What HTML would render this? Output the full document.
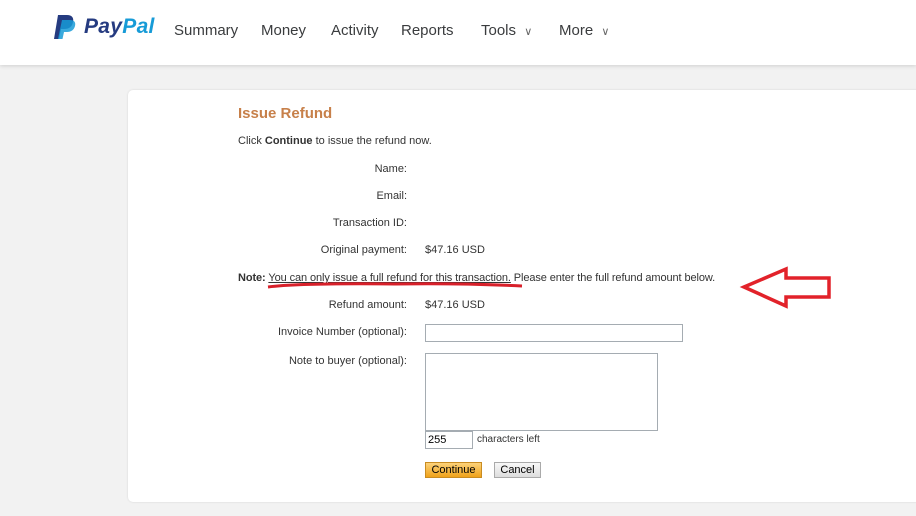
<!DOCTYPE html>
<html><head><style>
body{margin:0;width:916px;height:516px;overflow:hidden;background:#f2f2f2;font-family:"Liberation Sans",Arial,sans-serif;position:relative}
.hdr{position:absolute;left:0;top:0;width:916px;height:65px;background:#fff;box-shadow:0 1px 4px rgba(0,0,0,.15)}
.nav{position:absolute;top:22px;font-size:15px;color:#3a3c3e}
.card{position:absolute;left:128px;top:90px;width:800px;height:412px;background:#fff;border-radius:5px;box-shadow:0 0 2px rgba(0,0,0,.12)}
.t{position:absolute;font-size:11px;color:#333;white-space:nowrap}
.l{position:absolute;right:509px;font-size:11px;color:#333;text-align:right;white-space:nowrap}
.in{position:absolute;border:1px solid #a5acb2;background:#fff;box-sizing:border-box}
.btn{position:absolute;font-size:11px;text-align:center;box-sizing:border-box;height:16px;line-height:14px}
</style></head><body>
<div class="hdr">
<svg style="position:absolute;left:54px;top:15px" width="22" height="25" viewBox="0 0 22 25"><path d="M4 0h9c5 0 7 3 6 7-1 5-4 7-9 7H7l-2 10H0z" fill="#253b80"/><path d="M8 5h8c4 0 6 2 5 6-1 4-4 6-8 6h-3l-1.5 7H4z" fill="#179bd7" opacity=".85"/></svg>
<div style="position:absolute;left:84px;top:15px;font-size:21px;font-weight:bold;font-style:italic;color:#253b80;letter-spacing:0.3px">Pay<span style="color:#179bd7">Pal</span></div>
<div class="nav" style="left:174px">Summary</div>
<div class="nav" style="left:261px">Money</div>
<div class="nav" style="left:331px">Activity</div>
<div class="nav" style="left:401px">Reports</div>
<div class="nav" style="left:481px">Tools <span style="font-size:11px;color:#666;margin-left:4px">&#8744;</span></div>
<div class="nav" style="left:559px">More <span style="font-size:11px;color:#666;margin-left:4px">&#8744;</span></div>
</div>
<div class="card"></div>
<div class="t" style="left:238px;top:105px;font-size:15px;font-weight:bold;color:#c7804a">Issue Refund</div>
<div class="t" style="left:238px;top:135px">Click <b>Continue</b> to issue the refund now.</div>
<div class="l" style="top:163px">Name:</div>
<div class="l" style="top:190px">Email:</div>
<div class="l" style="top:217px">Transaction ID:</div>
<div class="l" style="top:244px">Original payment:</div>
<div class="t" style="left:425px;top:244px">$47.16 USD</div>
<div class="t" style="left:238px;top:272px;letter-spacing:-0.1px"><b>Note:</b> <span style="text-decoration:underline">You can only issue a full refund for this transaction.</span> Please enter the full refund amount below.</div>
<svg style="position:absolute;left:0;top:0" width="916" height="516"><path d="M268 287 Q300 283 395 284 Q460 283 522 286" stroke="#d8202a" stroke-width="3" fill="none"/><polygon points="744,287 786,269 786,278 829,278 829,297 786,297 786,306" fill="none" stroke="#e2222a" stroke-width="3.5" stroke-linejoin="miter"/></svg>
<div class="l" style="top:299px">Refund amount:</div>
<div class="t" style="left:425px;top:299px">$47.16 USD</div>
<div class="l" style="top:326px">Invoice Number (optional):</div>
<div class="in" style="left:425px;top:324px;width:258px;height:18px"></div>
<div class="l" style="top:355px">Note to buyer (optional):</div>
<div class="in" style="left:425px;top:353px;width:233px;height:78px"></div>
<div class="in" style="left:425px;top:431px;width:48px;height:18px;font-size:11px;padding:2px 0 0 2px">255</div>
<div class="t" style="left:477px;top:434px;font-size:10px">characters left</div>
<div class="btn" style="left:425px;top:462px;width:57px;background:linear-gradient(#fcd27a,#f0a21a);border:1px solid #c98c22;color:#000">Continue</div>
<div class="btn" style="left:494px;top:462px;width:47px;background:linear-gradient(#f8f8f8,#ddd);border:1px solid #aaa;color:#000">Cancel</div>
</body></html>
